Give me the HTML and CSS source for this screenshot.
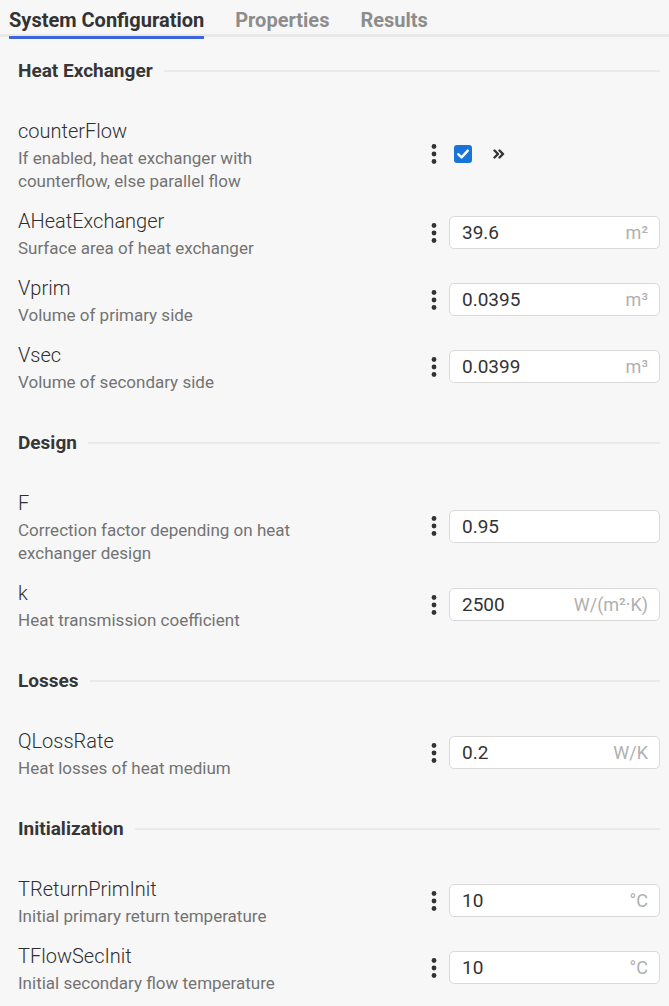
FILE: index.html
```html
<!DOCTYPE html>
<html lang="en">
<head>
<meta charset="utf-8">
<title>System Configuration</title>
<link rel="stylesheet" href="styles.css">
</head>
<body>
<nav class="tabs">
  <div class="tab active">System Configuration</div>
  <div class="tab">Properties</div>
  <div class="tab">Results</div>
</nav>
<main class="content">
  <section class="section">
    <div class="section-title">Heat Exchanger</div>
    <div class="row">
      <div class="info">
        <div class="label">counterFlow</div>
        <div class="desc">If enabled, heat exchanger with counterflow, else parallel flow</div>
      </div>
      <div class="control">
        <span class="dots"><svg width="16" height="20" viewBox="0 0 16 20"><circle cx="8" cy="2.5" r="2.4"/><circle cx="8" cy="10" r="2.4"/><circle cx="8" cy="17.5" r="2.4"/></svg></span>
        <span class="checkbox"><svg width="18" height="18" viewBox="0 0 18 18"><rect x="0" y="0" width="18" height="18" rx="3" fill="#1a73d9"/><path d="M4.2 9.2 L7.6 12.4 L13.8 5.6" fill="none" stroke="#fff" stroke-width="2.4" stroke-linecap="round" stroke-linejoin="round"/></svg></span>
        <span class="chevrons"><svg width="12" height="10" viewBox="0 0 12 10"><path d="M1.5 1.5 L5 5 L1.5 8.5 M6.5 1.5 L10 5 L6.5 8.5" fill="none" stroke="#333" stroke-width="2.4" stroke-linecap="round" stroke-linejoin="round"/></svg></span>
      </div>
    </div>
    <div class="row">
      <div class="info">
        <div class="label">AHeatExchanger</div>
        <div class="desc">Surface area of heat exchanger</div>
      </div>
      <div class="control">
        <span class="dots"><svg width="16" height="20" viewBox="0 0 16 20"><circle cx="8" cy="2.5" r="2.4"/><circle cx="8" cy="10" r="2.4"/><circle cx="8" cy="17.5" r="2.4"/></svg></span>
        <div class="field"><span class="value">39.6</span><span class="unit">m²</span></div>
      </div>
    </div>
    <div class="row">
      <div class="info">
        <div class="label">Vprim</div>
        <div class="desc">Volume of primary side</div>
      </div>
      <div class="control">
        <span class="dots"><svg width="16" height="20" viewBox="0 0 16 20"><circle cx="8" cy="2.5" r="2.4"/><circle cx="8" cy="10" r="2.4"/><circle cx="8" cy="17.5" r="2.4"/></svg></span>
        <div class="field"><span class="value">0.0395</span><span class="unit">m³</span></div>
      </div>
    </div>
    <div class="row">
      <div class="info">
        <div class="label">Vsec</div>
        <div class="desc">Volume of secondary side</div>
      </div>
      <div class="control">
        <span class="dots"><svg width="16" height="20" viewBox="0 0 16 20"><circle cx="8" cy="2.5" r="2.4"/><circle cx="8" cy="10" r="2.4"/><circle cx="8" cy="17.5" r="2.4"/></svg></span>
        <div class="field"><span class="value">0.0399</span><span class="unit">m³</span></div>
      </div>
    </div>
  </section>

  <section class="section">
    <div class="section-title">Design</div>
    <div class="row">
      <div class="info">
        <div class="label">F</div>
        <div class="desc">Correction factor depending on heat exchanger design</div>
      </div>
      <div class="control">
        <span class="dots"><svg width="16" height="20" viewBox="0 0 16 20"><circle cx="8" cy="2.5" r="2.4"/><circle cx="8" cy="10" r="2.4"/><circle cx="8" cy="17.5" r="2.4"/></svg></span>
        <div class="field"><span class="value">0.95</span><span class="unit"></span></div>
      </div>
    </div>
    <div class="row">
      <div class="info">
        <div class="label">k</div>
        <div class="desc">Heat transmission coefficient</div>
      </div>
      <div class="control">
        <span class="dots"><svg width="16" height="20" viewBox="0 0 16 20"><circle cx="8" cy="2.5" r="2.4"/><circle cx="8" cy="10" r="2.4"/><circle cx="8" cy="17.5" r="2.4"/></svg></span>
        <div class="field"><span class="value">2500</span><span class="unit">W/(m²·K)</span></div>
      </div>
    </div>
  </section>

  <section class="section">
    <div class="section-title">Losses</div>
    <div class="row">
      <div class="info">
        <div class="label">QLossRate</div>
        <div class="desc">Heat losses of heat medium</div>
      </div>
      <div class="control">
        <span class="dots"><svg width="16" height="20" viewBox="0 0 16 20"><circle cx="8" cy="2.5" r="2.4"/><circle cx="8" cy="10" r="2.4"/><circle cx="8" cy="17.5" r="2.4"/></svg></span>
        <div class="field"><span class="value">0.2</span><span class="unit">W/K</span></div>
      </div>
    </div>
  </section>

  <section class="section">
    <div class="section-title">Initialization</div>
    <div class="row">
      <div class="info">
        <div class="label">TReturnPrimInit</div>
        <div class="desc">Initial primary return temperature</div>
      </div>
      <div class="control">
        <span class="dots"><svg width="16" height="20" viewBox="0 0 16 20"><circle cx="8" cy="2.5" r="2.4"/><circle cx="8" cy="10" r="2.4"/><circle cx="8" cy="17.5" r="2.4"/></svg></span>
        <div class="field"><span class="value">10</span><span class="unit">°C</span></div>
      </div>
    </div>
    <div class="row">
      <div class="info">
        <div class="label">TFlowSecInit</div>
        <div class="desc">Initial secondary flow temperature</div>
      </div>
      <div class="control">
        <span class="dots"><svg width="16" height="20" viewBox="0 0 16 20"><circle cx="8" cy="2.5" r="2.4"/><circle cx="8" cy="10" r="2.4"/><circle cx="8" cy="17.5" r="2.4"/></svg></span>
        <div class="field"><span class="value">10</span><span class="unit">°C</span></div>
      </div>
    </div>
  </section>
</main>
</body>
</html>
```
FILE: styles.css
```css
html, body {
  margin: 0;
  background: #f7f7f7;
  font-family: Roboto, "Liberation Sans", sans-serif;
  color: #333;
}

.tabs {
  display: flex;
  gap: 31px;
  height: 34px;
  padding: 0 9px;
  border-bottom: 3px solid #e8e8e8;
}

.tab {
  position: relative;
  padding-top: 6px;
  font-size: 20px;
  font-weight: 700;
  line-height: 28px;
  color: #8d8d8d;
  white-space: nowrap;
}

.tab.active {
  color: #333;
}

.tab.active::after {
  content: "";
  position: absolute;
  left: 0;
  right: 0;
  bottom: -5px;
  height: 3px;
  background: #3d63dd;
}

.content {
  padding: 19px 9px 0 18px;
}

.section + .section {
  margin-top: 28px;
}

.section-title {
  display: flex;
  align-items: center;
  gap: 11px;
  margin-bottom: 23px;
  font-size: 19px;
  font-weight: 700;
  line-height: 30px;
  color: #363636;
}

.section-title::after {
  content: "";
  flex: 1;
  height: 2px;
  background: #eaeaea;
}

.row {
  display: flex;
  align-items: center;
  padding: 6px 0;
}

.info {
  flex: none;
  width: 300px;
}

.label {
  font-size: 20px;
  font-weight: 300;
  line-height: 32px;
  color: #2f2f2f;
}

.desc {
  font-size: 17px;
  line-height: 23px;
  color: #737373;
}

.control {
  display: flex;
  align-items: center;
  width: 234px;
  margin-left: auto;
}

.dots {
  display: flex;
  width: 16px;
  height: 20px;
  margin-right: 7px;
  fill: #333;
}

.checkbox {
  display: flex;
  margin-left: 5px;
}

.chevrons {
  display: flex;
  margin-left: 21px;
}

.field {
  flex: 1;
  display: flex;
  align-items: center;
  justify-content: space-between;
  height: 33px;
  box-sizing: border-box;
  padding: 0 11px 0 12px;
  background: #fff;
  border: 1px solid #dadada;
  border-radius: 5px;
}

.value {
  font-size: 19px;
  color: #333;
}

.unit {
  font-size: 18px;
  color: #b0b0b0;
}
```
